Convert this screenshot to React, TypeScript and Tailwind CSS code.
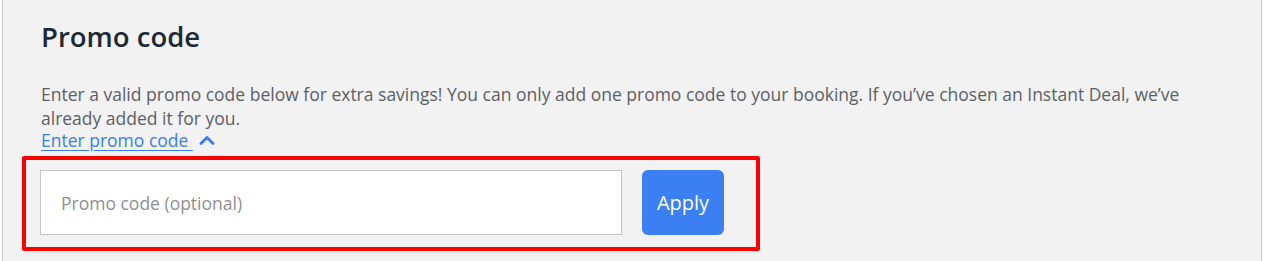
import React, { useState } from "react";

export default function App() {
  const [open, setOpen] = useState(true);
  const [code, setCode] = useState("");

  return (
    <div className="h-[261px] w-[1265px] overflow-hidden bg-white font-['Open_Sans',sans-serif]">
      <div className="ml-[2px] h-full w-[1260px] border-x border-[#c9c9c9] bg-[#f2f2f2] pl-[38px] pr-[39px] pt-[19px]">
        {/* Heading */}
        <h2 className="text-[27.5px] font-semibold leading-[36px] text-[#1d2a35]">Promo code</h2>

        {/* Description */}
        <p className="mt-[27px] text-[17.5px] leading-[24px] text-[#5c6066]">
          Enter a valid promo code below for extra savings! You can only add one promo code to your booking. If
          you’ve chosen an Instant Deal, we’ve already added it for you.
        </p>

        {/* Toggle */}
        <button
          type="button"
          onClick={() => setOpen(!open)}
          className="flex items-center gap-[6px] text-[17.5px] leading-[20px] text-[#3b7ee8]"
        >
          <span className="whitespace-pre underline underline-offset-[3px]">{"Enter promo code "}</span>
          <svg width="16" height="10" viewBox="0 0 16 10" fill="none" className={open ? "" : "rotate-180"}>
            <polyline
              points="2,8.5 8,2.5 14,8.5"
              stroke="#3b7ee8"
              strokeWidth="2.8"
              strokeLinecap="round"
              strokeLinejoin="round"
            />
          </svg>
        </button>

        {/* Form */}
        {open && (
          <div className="ml-[-19px] mt-[6px] flex w-[738px] items-center rounded-[2px] border-4 border-[#ff0000] pb-[12px] pl-[14px] pr-[32px] pt-[10px]">
            <input
              type="text"
              value={code}
              onChange={(e) => setCode(e.target.value)}
              placeholder="Promo code (optional)"
              className="h-[65px] w-[582px] border border-[#c4c4c4] bg-white px-[20px] text-[17.5px] text-[#333] placeholder-[#8f8f8f] outline-none"
            />
            <button
              type="button"
              className="ml-[20px] h-[65px] w-[82px] rounded-[6px] bg-[#3a80f2] text-[20px] text-white"
            >
              Apply
            </button>
          </div>
        )}
      </div>
    </div>
  );
}
